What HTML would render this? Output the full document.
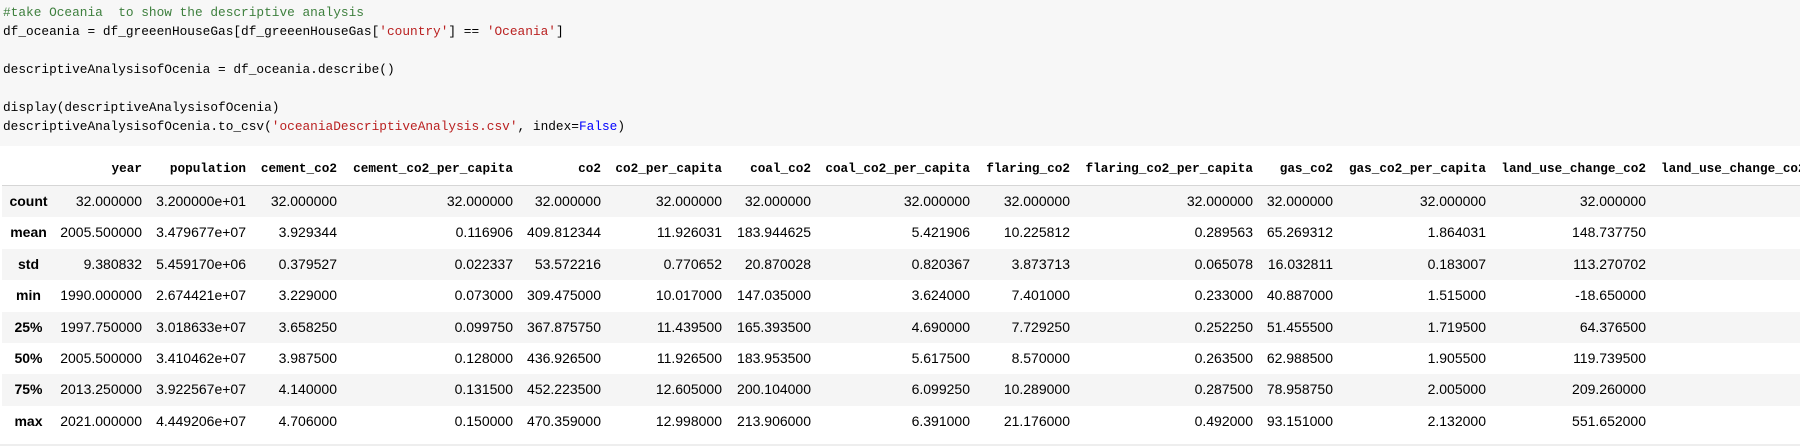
<!DOCTYPE html>
<html><head><meta charset="utf-8"><style>
*{margin:0;padding:0;box-sizing:border-box}
body{width:1808px;height:447px;background:#fff;position:relative;overflow:hidden}
.code{position:absolute;left:0;top:0;width:1800px;height:146px;background:#f7f7f7;font-family:"Liberation Mono",monospace;font-size:12.8px;line-height:19px;color:#000;padding-top:3px;padding-left:3px;white-space:pre}
.c{color:#3d7f3d}.s{color:#ba2121}.k{color:#0000ff}
.tbl{position:absolute;left:0;top:153px;width:1800px;height:294px;overflow:hidden}
.r{position:absolute;left:2px;width:1798px;height:31.4px}
.r.z{background:#f5f5f5}
.r span{position:absolute;top:0;line-height:31.4px;white-space:nowrap;text-align:right;font-family:"Liberation Sans",Arial,sans-serif;font-size:14px;color:#000}
.r span:first-child{left:-2px;width:57px;text-align:center;font-weight:bold}
.h span{font-family:"Liberation Mono",monospace;font-weight:bold;font-size:12.7px;line-height:32px}
.r span:nth-child(2){right:calc(1798px - 140px)}
.r span:nth-child(3){right:calc(1798px - 244px)}
.r span:nth-child(4){right:calc(1798px - 335px)}
.r span:nth-child(5){right:calc(1798px - 511px)}
.r span:nth-child(6){right:calc(1798px - 599px)}
.r span:nth-child(7){right:calc(1798px - 720px)}
.r span:nth-child(8){right:calc(1798px - 809px)}
.r span:nth-child(9){right:calc(1798px - 968px)}
.r span:nth-child(10){right:calc(1798px - 1068px)}
.r span:nth-child(11){right:calc(1798px - 1251px)}
.r span:nth-child(12){right:calc(1798px - 1331px)}
.r span:nth-child(13){right:calc(1798px - 1484px)}
.r span:nth-child(14){right:calc(1798px - 1644px)}
.r span:nth-child(15){left:1659px;text-align:left}
.hl{position:absolute;left:2px;top:32px;width:1798px;height:2px;background:#d6d6d6}
.bl{position:absolute;left:0;top:444px;width:1800px;height:2px;background:#eee}
</style></head><body>
<div class="code"><span class="c">#take Oceania  to show the descriptive analysis</span>
df_oceania = df_greeenHouseGas[df_greeenHouseGas[<span class="s">'country'</span>] == <span class="s">'Oceania'</span>]

descriptiveAnalysisofOcenia = df_oceania.describe()

display(descriptiveAnalysisofOcenia)
descriptiveAnalysisofOcenia.to_csv(<span class="s">'oceaniaDescriptiveAnalysis.csv'</span>, index=<span class="k">False</span>)</div>
<div class="tbl">
<div class="r h" style="top:0"><span></span><span>year</span><span>population</span><span>cement_co2</span><span>cement_co2_per_capita</span><span>co2</span><span>co2_per_capita</span><span>coal_co2</span><span>coal_co2_per_capita</span><span>flaring_co2</span><span>flaring_co2_per_capita</span><span>gas_co2</span><span>gas_co2_per_capita</span><span>land_use_change_co2</span><span>land_use_change_co2_per_capita</span></div>
<div class="hl"></div>
<div class="r z" style="top:33px"><span>count</span><span>32.000000</span><span>3.200000e+01</span><span>32.000000</span><span>32.000000</span><span>32.000000</span><span>32.000000</span><span>32.000000</span><span>32.000000</span><span>32.000000</span><span>32.000000</span><span>32.000000</span><span>32.000000</span><span>32.000000</span></div>
<div class="r" style="top:64.4px"><span>mean</span><span>2005.500000</span><span>3.479677e+07</span><span>3.929344</span><span>0.116906</span><span>409.812344</span><span>11.926031</span><span>183.944625</span><span>5.421906</span><span>10.225812</span><span>0.289563</span><span>65.269312</span><span>1.864031</span><span>148.737750</span></div>
<div class="r z" style="top:95.8px"><span>std</span><span>9.380832</span><span>5.459170e+06</span><span>0.379527</span><span>0.022337</span><span>53.572216</span><span>0.770652</span><span>20.870028</span><span>0.820367</span><span>3.873713</span><span>0.065078</span><span>16.032811</span><span>0.183007</span><span>113.270702</span></div>
<div class="r" style="top:127.2px"><span>min</span><span>1990.000000</span><span>2.674421e+07</span><span>3.229000</span><span>0.073000</span><span>309.475000</span><span>10.017000</span><span>147.035000</span><span>3.624000</span><span>7.401000</span><span>0.233000</span><span>40.887000</span><span>1.515000</span><span>-18.650000</span></div>
<div class="r z" style="top:158.6px"><span>25%</span><span>1997.750000</span><span>3.018633e+07</span><span>3.658250</span><span>0.099750</span><span>367.875750</span><span>11.439500</span><span>165.393500</span><span>4.690000</span><span>7.729250</span><span>0.252250</span><span>51.455500</span><span>1.719500</span><span>64.376500</span></div>
<div class="r" style="top:190px"><span>50%</span><span>2005.500000</span><span>3.410462e+07</span><span>3.987500</span><span>0.128000</span><span>436.926500</span><span>11.926500</span><span>183.953500</span><span>5.617500</span><span>8.570000</span><span>0.263500</span><span>62.988500</span><span>1.905500</span><span>119.739500</span></div>
<div class="r z" style="top:221.4px"><span>75%</span><span>2013.250000</span><span>3.922567e+07</span><span>4.140000</span><span>0.131500</span><span>452.223500</span><span>12.605000</span><span>200.104000</span><span>6.099250</span><span>10.289000</span><span>0.287500</span><span>78.958750</span><span>2.005000</span><span>209.260000</span></div>
<div class="r" style="top:252.8px"><span>max</span><span>2021.000000</span><span>4.449206e+07</span><span>4.706000</span><span>0.150000</span><span>470.359000</span><span>12.998000</span><span>213.906000</span><span>6.391000</span><span>21.176000</span><span>0.492000</span><span>93.151000</span><span>2.132000</span><span>551.652000</span></div>
</div>
<div class="bl"></div>
</body></html>
